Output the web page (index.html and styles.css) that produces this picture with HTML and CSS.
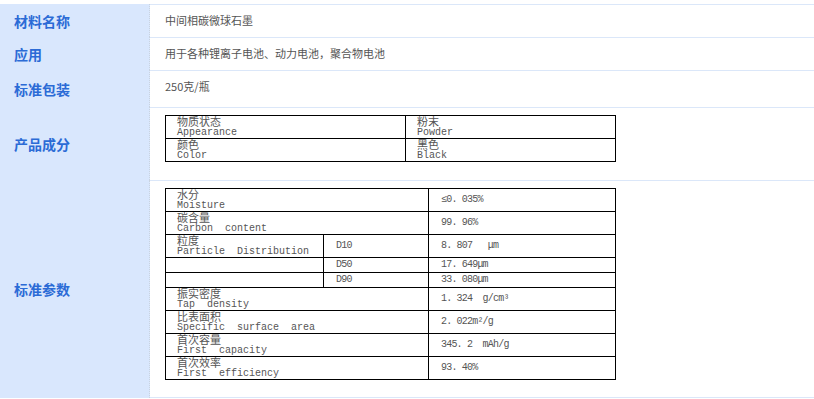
FILE: index.html
```html
<!DOCTYPE html>
<html lang="zh-CN">
<head>
<meta charset="utf-8">
<title>中间相碳微球石墨</title>
<link rel="stylesheet" href="styles.css">
</head>
<body>
<table class="spec">
  <tr>
    <th class="label">材料名称</th>
    <td class="value">中间相碳微球石墨</td>
  </tr>
  <tr>
    <th class="label">应用</th>
    <td class="value">用于各种锂离子电池、动力电池，聚合物电池</td>
  </tr>
  <tr>
    <th class="label">标准包装</th>
    <td class="value value--tall">250克/瓶</td>
  </tr>
  <tr>
    <th class="label">产品成分</th>
    <td class="value value--block">
      <table class="grid">
        <colgroup><col class="comp-c1"><col class="comp-c2"></colgroup>
        <tr>
          <td class="pair"><span class="zh">物质状态</span><span class="en">Appearance</span></td>
          <td class="pair"><span class="zh">粉末</span><span class="en">Powder</span></td>
        </tr>
        <tr>
          <td class="pair"><span class="zh">颜色</span><span class="en">Color</span></td>
          <td class="pair"><span class="zh">黑色</span><span class="en">Black</span></td>
        </tr>
      </table>
    </td>
  </tr>
  <tr>
    <th class="label label--last">标准参数</th>
    <td class="value value--block value--last">
      <table class="grid">
        <colgroup><col class="par-c1"><col class="par-c2"><col class="par-c3"></colgroup>
        <tr>
          <td class="pair" colspan="2"><span class="zh">水分</span><span class="en">Moisture</span></td>
          <td class="num">≤0. 035%</td>
        </tr>
        <tr>
          <td class="pair" colspan="2"><span class="zh">碳含量</span><span class="en">Carbon  content</span></td>
          <td class="num">99. 96%</td>
        </tr>
        <tr>
          <td class="pair"><span class="zh">粒度</span><span class="en">Particle  Distribution</span></td>
          <td class="num">D10</td>
          <td class="num">8. 807   μm</td>
        </tr>
        <tr class="short">
          <td class="num"></td>
          <td class="num">D50</td>
          <td class="num">17. 649μm</td>
        </tr>
        <tr class="short">
          <td class="num"></td>
          <td class="num">D90</td>
          <td class="num">33. 080μm</td>
        </tr>
        <tr>
          <td class="pair" colspan="2"><span class="zh">振实密度</span><span class="en">Tap  density</span></td>
          <td class="num">1. 324  g/cm³</td>
        </tr>
        <tr>
          <td class="pair" colspan="2"><span class="zh">比表面积</span><span class="en">Specific  surface  area</span></td>
          <td class="num">2. 022m²/g</td>
        </tr>
        <tr>
          <td class="pair" colspan="2"><span class="zh">首次容量</span><span class="en">First  capacity</span></td>
          <td class="num">345. 2  mAh/g</td>
        </tr>
        <tr>
          <td class="pair" colspan="2"><span class="zh">首次效率</span><span class="en">First  efficiency</span></td>
          <td class="num">93. 40%</td>
        </tr>
      </table>
    </td>
  </tr>
</table>
</body>
</html>
```

FILE: styles.css
```css
html, body {
  margin: 0;
  background: #ffffff;
}

body {
  padding-top: 4px;
  font-family: "Noto Sans CJK SC", "Liberation Sans", sans-serif;
}

.spec {
  width: 100%;
  border-collapse: separate;
  border-spacing: 0;
  table-layout: fixed;
}

.label {
  box-sizing: border-box;
  width: 150px;
  padding: 0 0 0 14px;
  background: #d9e7fd;
  border-right: 1px dotted #c9d3e0;
  color: #2b6bd6;
  font-size: 14px;
  font-weight: bold;
  text-align: left;
  vertical-align: middle;
  white-space: nowrap;
}

.value {
  border-top: 1px solid #dbe7f9;
  padding: 7px 15px 8px 15px;
  color: #555555;
  font-size: 11px;
  line-height: 17px;
  vertical-align: top;
}

.value--tall {
  padding-bottom: 12px;
}

.value--block {
  padding-bottom: 18px;
  line-height: normal;
}

.value--last {
  padding-bottom: 17px;
  border-bottom: 1px solid #dbe7f9;
}

.grid {
  border-collapse: collapse;
  table-layout: fixed;
  width: 450px;
  color: #555555;
}

.comp-c1 { width: 240px; }
.comp-c2 { width: 210px; }
.par-c1 { width: 158px; }
.par-c2 { width: 105px; }
.par-c3 { width: 187px; }

.grid td {
  border: 1px solid #000000;
  padding: 0 0 0 11px;
  vertical-align: middle;
}

.pair .zh,
.pair .en {
  display: block;
  height: 11px;
  line-height: 11px;
  white-space: pre;
}

.zh {
  font-family: "Noto Sans CJK SC", sans-serif;
  font-size: 11px;
}

.en {
  font-family: "Liberation Mono", monospace;
  font-size: 10px;
}

.num {
  font-family: "Liberation Mono", "Noto Sans CJK SC", monospace;
  font-size: 10px;
  letter-spacing: -0.8px;
  line-height: 14px;
  white-space: pre;
}

.grid td.num {
  padding-left: 12px;
}

.short td {
  height: 14px;
}
```
